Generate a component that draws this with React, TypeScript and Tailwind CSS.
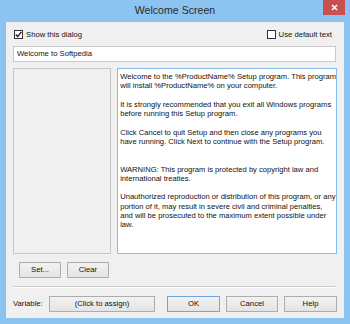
import React from "react";

const font = { fontFamily: '"Liberation Sans", Arial, sans-serif' };

function Check({ checked }: { checked?: boolean }) {
  return (
    <span className="w-[9px] h-[9px] border border-[#333] bg-white flex items-center justify-center shrink-0">
      {checked && (
        <svg width="7" height="7" viewBox="0 0 7 7">
          <path d="M0.8 3.6 L2.7 5.6 L6.3 0.9" stroke="#222" strokeWidth="1.4" fill="none" />
        </svg>
      )}
    </span>
  );
}

function Btn({ label, w, isDefault }: { label: string; w: string; isDefault?: boolean }) {
  return (
    <button
      className={`${w} h-[16px] flex items-center justify-center text-[7.7px] text-[#111] bg-gradient-to-b from-[#f2f2f2] to-[#e4e4e4] border ${
        isDefault ? "border-[#6fa8e0]" : "border-[#adadad]"
      }`}
    >
      {label}
    </button>
  );
}

const paragraphs: string[][] = [
  ["Welcome to the %ProductName% Setup program. This program", "will install %ProductName% on your computer."],
  [""],
  ["It is strongly recommended that you exit all Windows programs", "before running this Setup program."],
  [""],
  ["Click Cancel to quit Setup and then close any programs you", "have running. Click Next to continue with the Setup program."],
  [""],
  [""],
  ["WARNING: This program is protected by copyright law and", "international treaties."],
  [""],
  [
    "Unauthorized reproduction or distribution of this program, or any",
    "portion of it, may result in severe civil and criminal penalties,",
    "and will be prosecuted to the maximum extent possible under",
    "law.",
  ],
];

export default function App() {
  const lines = paragraphs.flat();
  return (
    <div className="w-[350px] h-[324px] bg-[#8cc3f1] flex flex-col" style={font}>
      {/* Title bar */}
      <div className="h-[22px] relative flex items-center justify-center">
        <span className="text-[10.6px] text-[#2b2b2b] pb-[1px]">Welcome Screen</span>
        <div className="absolute right-[5px] top-0 w-[22px] h-[15px] bg-[#c75050] flex items-center justify-center">
          <svg width="7" height="7" viewBox="0 0 7 7">
            <path d="M1 1 L6 6 M6 1 L1 6" stroke="#fff" strokeWidth="1.5" />
          </svg>
        </div>
      </div>

      {/* Client area */}
      <div className="flex-1 mx-[6px] mb-[6px] bg-[#f0f0f0] flex flex-col px-[7px] text-[7.7px] text-[#111]">
        <div className="flex items-center justify-between mt-[8px] h-[9px]">
          <label className="flex items-center gap-[3px] ml-[1px]">
            <Check checked />
            <span>Show this dialog</span>
          </label>
          <label className="flex items-center gap-[3px] mr-[5px]">
            <Check />
            <span>Use default text</span>
          </label>
        </div>

        <div className="mt-[7px] h-[16px] mr-[1px] border border-[#c9c9c9] bg-white flex items-center pl-[3px]">
          Welcome to Softpedia
        </div>

        <div className="mt-[6px] h-[186px] flex gap-[6px]">
          <div className="w-[99px] border border-[#c6c6c6] bg-[#f0f0f0]" />
          <div className="flex-1 border border-[#86bdf0] bg-white pt-[3px] pl-[2px] leading-[9.25px] text-[7.6px] text-[#111]">
            {lines.map((l, i) => (
              <div key={i} className="h-[9.25px] whitespace-nowrap">
                {l}
              </div>
            ))}
          </div>
        </div>

        <div className="mt-[8px] flex gap-[6px] pl-[6px]">
          <Btn label="Set..." w="w-[42px]" />
          <Btn label="Clear" w="w-[42px]" />
        </div>

        <div className="mt-[8px] mr-[2px] h-[2px] border-t border-[#c8c8c8] border-b border-b-white" />

        <div className="mt-[8px] flex items-center">
          <span className="w-[36px]">Variable:</span>
          <Btn label="(Click to assign)" w="w-[106px]" />
          <div className="ml-[12px] flex gap-[6px]">
            <Btn label="OK" w="w-[53px]" isDefault />
            <Btn label="Cancel" w="w-[52px]" />
            <Btn label="Help" w="w-[53px]" />
          </div>
        </div>
      </div>
    </div>
  );
}
